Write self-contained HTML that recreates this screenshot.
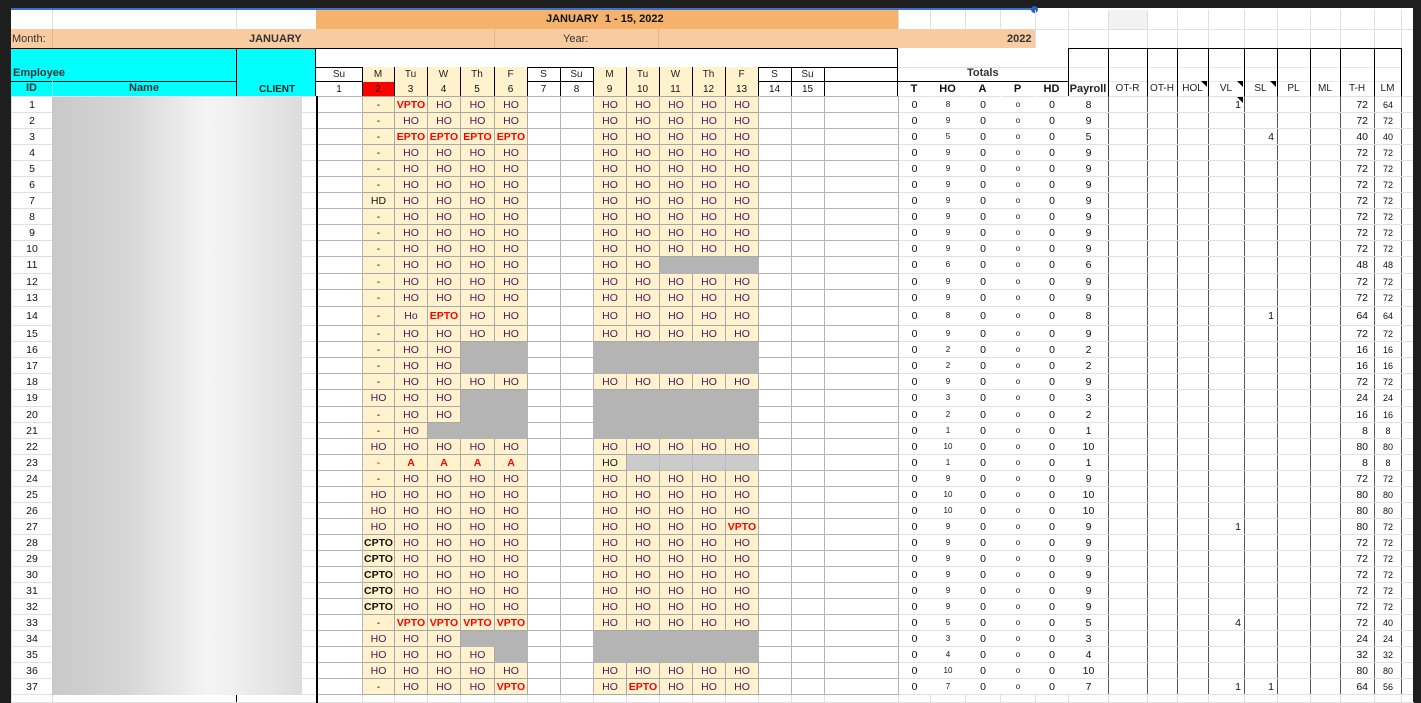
<!DOCTYPE html>
<html><head><meta charset="utf-8">
<style>
*{margin:0;padding:0;box-sizing:border-box}
body{width:1421px;height:702px;background:#1e1e1e;position:relative;overflow:hidden;font-family:"Liberation Sans",Arial,sans-serif;font-size:10px;color:#111}
.sheet{position:absolute;left:11px;top:8px;width:1402px;height:694px;background:#fff}
.a{position:absolute}
table{position:absolute;left:11px;top:96px;border-collapse:collapse;table-layout:fixed}
td{border:1px solid #e0e0e0;height:16px;text-align:center;white-space:nowrap;overflow:hidden;padding:0;font-size:10.5px;line-height:14px}
td:nth-child(n+4):nth-child(-n+19){border-color:#b4b4b4}
td:nth-child(n+5):nth-child(-n+9),td:nth-child(n+12):nth-child(-n+16){background:#fff2cc;border-color:#a8a8a8;color:#4a1660}
td:nth-child(3){border-right:2px solid #000}
td:nth-child(19){border-right:1px solid #b4b4b4}
td:nth-child(n+20):nth-child(-n+24){border-left-color:#fff;border-right-color:#fff}
td:nth-child(20){border-left:1px solid #ccc}
td:nth-child(21),td:nth-child(23){font-size:8px}
td:nth-child(n+25):nth-child(-n+34){border-left:1px solid #555;border-right:1px solid #555}
td:nth-child(29),td:nth-child(30){text-align:right;padding-right:3px}
td:nth-child(33){text-align:right;padding-right:6px}
td:nth-child(34){font-size:9px}
td.k{color:#111 !important}
td.r{color:#f00 !important;font-weight:bold}
td.b{color:#111 !important;font-weight:bold}
td.g{background:#b4b4b4 !important;border-color:#b4b4b4 !important}
td.l{background:#cbcbcb !important;border-color:#bdbdbd !important}
tr.last td{background:#fff !important;border-color:#e0e0e0 !important;height:8px}
tr.t17 td{height:17px}tr.t19 td{height:19px}
.hd{font-weight:bold;font-size:11px}
</style></head><body>
<div class="sheet"></div>
<div class="a" style="left:11px;top:8px;width:1024px;height:2px;background:#3a70d0"></div>
<div class="a" style="left:1031px;top:6px;width:7px;height:7px;border-radius:50%;background:#2a5fc8"></div>
<div class="a" style="left:11px;top:29px;width:1402px;height:1px;background:#e0e0e0"></div>
<div class="a" style="left:52px;top:10px;width:1px;height:19px;background:#e0e0e0"></div>
<div class="a" style="left:236px;top:10px;width:1px;height:19px;background:#e0e0e0"></div>
<div class="a" style="left:316px;top:10px;width:582px;height:19px;background:#f4b26b;font-weight:bold;font-size:11px;line-height:19px;padding-left:230px">JANUARY&nbsp; 1 - 15, 2022</div>
<div class="a" style="left:1108px;top:10px;width:39px;height:19px;background:#f2f2f2"></div>
<div class="a" style="left:898px;top:10px;width:1px;height:38px;background:#e0e0e0"></div>
<div class="a" style="left:930px;top:10px;width:1px;height:19px;background:#e0e0e0"></div>
<div class="a" style="left:965px;top:10px;width:1px;height:19px;background:#e0e0e0"></div>
<div class="a" style="left:1000px;top:10px;width:1px;height:19px;background:#e0e0e0"></div>
<div class="a" style="left:1035px;top:10px;width:1px;height:38px;background:#e0e0e0"></div>
<div class="a" style="left:1068px;top:10px;width:1px;height:38px;background:#e0e0e0"></div>
<div class="a" style="left:1108px;top:10px;width:1px;height:38px;background:#e0e0e0"></div>
<div class="a" style="left:1147px;top:10px;width:1px;height:38px;background:#e0e0e0"></div>
<div class="a" style="left:1177px;top:10px;width:1px;height:38px;background:#e0e0e0"></div>
<div class="a" style="left:1208px;top:10px;width:1px;height:38px;background:#e0e0e0"></div>
<div class="a" style="left:1244px;top:10px;width:1px;height:38px;background:#e0e0e0"></div>
<div class="a" style="left:1277px;top:10px;width:1px;height:38px;background:#e0e0e0"></div>
<div class="a" style="left:1310px;top:10px;width:1px;height:38px;background:#e0e0e0"></div>
<div class="a" style="left:1340px;top:10px;width:1px;height:38px;background:#e0e0e0"></div>
<div class="a" style="left:1374px;top:10px;width:1px;height:38px;background:#e0e0e0"></div>
<div class="a" style="left:1401px;top:10px;width:1px;height:86px;background:#e0e0e0"></div>
<div class="a" style="left:11px;top:29px;width:1024px;height:19px;background:#f8cba0"></div>
<div class="a" style="left:52px;top:29px;width:1px;height:19px;background:#e6b48a"></div>
<div class="a" style="left:494px;top:29px;width:1px;height:19px;background:#e6b48a"></div>
<div class="a" style="left:658px;top:29px;width:1px;height:19px;background:#e6b48a"></div>
<div class="a" style="left:12px;top:33px;font-size:11px;color:#333">Month:</div>
<div class="a" style="left:249px;top:33px;font-size:11px;font-weight:bold;color:#333">JANUARY</div>
<div class="a" style="left:563px;top:33px;font-size:11px;color:#333">Year:</div>
<div class="a" style="left:1007px;top:33px;font-size:11px;font-weight:bold;color:#333">2022</div>
<div class="a" style="left:11px;top:48px;width:887px;height:1px;background:#000"></div>
<div class="a" style="left:1068px;top:48px;width:333px;height:1px;background:#000"></div>
<div class="a" style="left:11px;top:49px;width:225px;height:47px;background:#00ffff"></div>
<div class="a" style="left:236px;top:49px;width:80px;height:47px;background:#00ffff;border-left:1px solid #000;border-right:1px solid #000"></div>
<div class="a" style="left:11px;top:81px;width:225px;height:1px;background:#000"></div>
<div class="a" style="left:52px;top:81px;width:1px;height:15px;background:#9ee"></div>
<div class="a hd" style="left:13px;top:67px;color:#333">Employee</div>
<div class="a hd" style="left:26px;top:82px;color:#333">ID</div>
<div class="a hd" style="left:129px;top:82px;color:#333">Name</div>
<div class="a hd" style="left:259px;top:84px;font-size:10px;color:#222">CLIENT</div>
<div class="a" style="left:316px;top:67px;width:582px;height:1px;background:#000"></div>
<div class="a" style="left:316px;top:81px;width:582px;height:1px;background:#000"></div>
<div class="a" style="left:316px;top:96px;width:582px;height:1px;background:#000"></div>
<div class="a" style="left:897px;top:48px;width:1px;height:48px;background:#000"></div>
<div class="a" style="left:362px;top:67px;width:165px;height:29px;background:#fff2cc"></div>
<div class="a" style="left:593px;top:67px;width:165px;height:29px;background:#fff2cc"></div>
<div class="a" style="left:362px;top:82px;width:32px;height:14px;background:#f00"></div>
<div class="a" style="top:67px;left:362px;width:1px;height:29px;background:#000"></div>
<div class="a" style="top:67px;left:394px;width:1px;height:29px;background:#000"></div>
<div class="a" style="top:67px;left:427px;width:1px;height:29px;background:#000"></div>
<div class="a" style="top:67px;left:460px;width:1px;height:29px;background:#000"></div>
<div class="a" style="top:67px;left:494px;width:1px;height:29px;background:#000"></div>
<div class="a" style="top:67px;left:527px;width:1px;height:29px;background:#000"></div>
<div class="a" style="top:67px;left:560px;width:1px;height:29px;background:#000"></div>
<div class="a" style="top:67px;left:593px;width:1px;height:29px;background:#000"></div>
<div class="a" style="top:67px;left:626px;width:1px;height:29px;background:#000"></div>
<div class="a" style="top:67px;left:659px;width:1px;height:29px;background:#000"></div>
<div class="a" style="top:67px;left:692px;width:1px;height:29px;background:#000"></div>
<div class="a" style="top:67px;left:725px;width:1px;height:29px;background:#000"></div>
<div class="a" style="top:67px;left:758px;width:1px;height:29px;background:#000"></div>
<div class="a" style="top:67px;left:791px;width:1px;height:29px;background:#000"></div>
<div class="a" style="top:67px;left:824px;width:1px;height:29px;background:#000"></div>
<div class="a" style="top:68px;left:316px;width:508px;display:flex;font-size:10px;line-height:13px;color:#222;text-align:center">
<span style="width:46px">Su</span><span style="width:32px">M</span><span style="width:33px">Tu</span><span style="width:33px">W</span><span style="width:34px">Th</span><span style="width:33px">F</span><span style="width:33px">S</span><span style="width:33px">Su</span><span style="width:33px">M</span><span style="width:33px">Tu</span><span style="width:33px">W</span><span style="width:33px">Th</span><span style="width:33px">F</span><span style="width:33px">S</span><span style="width:33px">Su</span></div>
<div class="a" style="top:83px;left:316px;width:508px;display:flex;font-size:10px;line-height:13px;color:#111;text-align:center">
<span style="width:46px">1</span><span style="width:32px">2</span><span style="width:33px">3</span><span style="width:33px">4</span><span style="width:34px">5</span><span style="width:33px">6</span><span style="width:33px">7</span><span style="width:33px">8</span><span style="width:33px">9</span><span style="width:33px">10</span><span style="width:33px">11</span><span style="width:33px">12</span><span style="width:33px">13</span><span style="width:33px">14</span><span style="width:33px">15</span></div>
<div class="a" style="left:898px;top:81px;width:170px;height:1px;background:#000"></div>
<div class="a" style="left:898px;top:96px;width:503px;height:1px;background:#000"></div>
<div class="a" style="left:898px;top:67px;width:170px;height:1px;background:#e0e0e0"></div>
<div class="a hd" style="left:967px;top:67px;color:#333">Totals</div>
<div class="a" style="top:82px;left:898px;width:170px;display:flex;font-size:11px;font-weight:bold;line-height:14px;text-align:center">
<span style="width:32px">T</span><span style="width:35px">HO</span><span style="width:35px">A</span><span style="width:35px">P</span><span style="width:33px">HD</span></div>
<div class="a" style="left:1068px;top:67px;width:333px;height:1px;background:#e6e6e6"></div>
<div class="a" style="left:1068px;top:81px;width:333px;height:1px;background:#e6e6e6"></div>
<div class="a" style="top:48px;left:1068px;width:1px;height:48px;background:#000"></div>
<div class="a" style="top:48px;left:1108px;width:1px;height:48px;background:#000"></div>
<div class="a" style="top:48px;left:1147px;width:1px;height:48px;background:#000"></div>
<div class="a" style="top:48px;left:1177px;width:1px;height:48px;background:#000"></div>
<div class="a" style="top:48px;left:1208px;width:1px;height:48px;background:#000"></div>
<div class="a" style="top:48px;left:1244px;width:1px;height:48px;background:#000"></div>
<div class="a" style="top:48px;left:1277px;width:1px;height:48px;background:#000"></div>
<div class="a" style="top:48px;left:1310px;width:1px;height:48px;background:#000"></div>
<div class="a" style="top:48px;left:1340px;width:1px;height:48px;background:#000"></div>
<div class="a" style="top:48px;left:1374px;width:1px;height:48px;background:#000"></div>
<div class="a" style="top:48px;left:1401px;width:1px;height:48px;background:#000"></div>
<div class="a" style="top:82px;left:1068px;width:333px;display:flex;font-size:10px;line-height:14px;text-align:center;color:#222">
<span style="width:40px;font-weight:bold;font-size:11px">Payroll</span><span style="width:39px">OT-R</span><span style="width:30px">OT-H</span><span style="width:31px">HOL</span><span style="width:36px">VL</span><span style="width:33px">SL</span><span style="width:33px">PL</span><span style="width:30px">ML</span><span style="width:34px">T-H</span><span style="width:27px">LM</span></div>
<svg class="a" style="left:0;top:0" width="1421" height="702">
<polygon points="1201,81 1207,81 1207,87" fill="#000"/>
<polygon points="1237,81 1243,81 1243,87" fill="#000"/>
<polygon points="1270,81 1276,81 1276,87" fill="#000"/>
<polygon points="1237,97 1243,97 1243,103" fill="#000"/>
</svg>

<table>
<colgroup><col style="width:41px"><col style="width:184px"><col style="width:80px"><col style="width:46px"><col style="width:32px"><col style="width:33px"><col style="width:33px"><col style="width:34px"><col style="width:33px"><col style="width:33px"><col style="width:33px"><col style="width:33px"><col style="width:33px"><col style="width:33px"><col style="width:33px"><col style="width:33px"><col style="width:33px"><col style="width:33px"><col style="width:74px"><col style="width:32px"><col style="width:35px"><col style="width:35px"><col style="width:35px"><col style="width:33px"><col style="width:40px"><col style="width:39px"><col style="width:30px"><col style="width:31px"><col style="width:36px"><col style="width:33px"><col style="width:33px"><col style="width:30px"><col style="width:34px"><col style="width:27px"><col style="width:12px"></colgroup>
<tr><td>1</td><td></td><td></td><td></td><td class=k>-</td><td class=r>VPTO</td><td>HO</td><td>HO</td><td>HO</td><td></td><td></td><td>HO</td><td>HO</td><td>HO</td><td>HO</td><td>HO</td><td></td><td></td><td></td><td>0</td><td>8</td><td>0</td><td>o</td><td>0</td><td>8</td><td></td><td></td><td></td><td>1</td><td></td><td></td><td></td><td>72</td><td>64</td><td></td></tr>
<tr><td>2</td><td></td><td></td><td></td><td class=k>-</td><td>HO</td><td>HO</td><td>HO</td><td>HO</td><td></td><td></td><td>HO</td><td>HO</td><td>HO</td><td>HO</td><td>HO</td><td></td><td></td><td></td><td>0</td><td>9</td><td>0</td><td>o</td><td>0</td><td>9</td><td></td><td></td><td></td><td></td><td></td><td></td><td></td><td>72</td><td>72</td><td></td></tr>
<tr><td>3</td><td></td><td></td><td></td><td class=k>-</td><td class=r>EPTO</td><td class=r>EPTO</td><td class=r>EPTO</td><td class=r>EPTO</td><td></td><td></td><td>HO</td><td>HO</td><td>HO</td><td>HO</td><td>HO</td><td></td><td></td><td></td><td>0</td><td>5</td><td>0</td><td>o</td><td>0</td><td>5</td><td></td><td></td><td></td><td></td><td>4</td><td></td><td></td><td>40</td><td>40</td><td></td></tr>
<tr><td>4</td><td></td><td></td><td></td><td class=k>-</td><td>HO</td><td>HO</td><td>HO</td><td>HO</td><td></td><td></td><td>HO</td><td>HO</td><td>HO</td><td>HO</td><td>HO</td><td></td><td></td><td></td><td>0</td><td>9</td><td>0</td><td>o</td><td>0</td><td>9</td><td></td><td></td><td></td><td></td><td></td><td></td><td></td><td>72</td><td>72</td><td></td></tr>
<tr><td>5</td><td></td><td></td><td></td><td class=k>-</td><td>HO</td><td>HO</td><td>HO</td><td>HO</td><td></td><td></td><td>HO</td><td>HO</td><td>HO</td><td>HO</td><td>HO</td><td></td><td></td><td></td><td>0</td><td>9</td><td>0</td><td>o</td><td>0</td><td>9</td><td></td><td></td><td></td><td></td><td></td><td></td><td></td><td>72</td><td>72</td><td></td></tr>
<tr><td>6</td><td></td><td></td><td></td><td class=k>-</td><td>HO</td><td>HO</td><td>HO</td><td>HO</td><td></td><td></td><td>HO</td><td>HO</td><td>HO</td><td>HO</td><td>HO</td><td></td><td></td><td></td><td>0</td><td>9</td><td>0</td><td>o</td><td>0</td><td>9</td><td></td><td></td><td></td><td></td><td></td><td></td><td></td><td>72</td><td>72</td><td></td></tr>
<tr><td>7</td><td></td><td></td><td></td><td class=k>HD</td><td>HO</td><td>HO</td><td>HO</td><td>HO</td><td></td><td></td><td>HO</td><td>HO</td><td>HO</td><td>HO</td><td>HO</td><td></td><td></td><td></td><td>0</td><td>9</td><td>0</td><td>o</td><td>0</td><td>9</td><td></td><td></td><td></td><td></td><td></td><td></td><td></td><td>72</td><td>72</td><td></td></tr>
<tr><td>8</td><td></td><td></td><td></td><td class=k>-</td><td>HO</td><td>HO</td><td>HO</td><td>HO</td><td></td><td></td><td>HO</td><td>HO</td><td>HO</td><td>HO</td><td>HO</td><td></td><td></td><td></td><td>0</td><td>9</td><td>0</td><td>o</td><td>0</td><td>9</td><td></td><td></td><td></td><td></td><td></td><td></td><td></td><td>72</td><td>72</td><td></td></tr>
<tr><td>9</td><td></td><td></td><td></td><td class=k>-</td><td>HO</td><td>HO</td><td>HO</td><td>HO</td><td></td><td></td><td>HO</td><td>HO</td><td>HO</td><td>HO</td><td>HO</td><td></td><td></td><td></td><td>0</td><td>9</td><td>0</td><td>o</td><td>0</td><td>9</td><td></td><td></td><td></td><td></td><td></td><td></td><td></td><td>72</td><td>72</td><td></td></tr>
<tr><td>10</td><td></td><td></td><td></td><td class=k>-</td><td>HO</td><td>HO</td><td>HO</td><td>HO</td><td></td><td></td><td>HO</td><td>HO</td><td>HO</td><td>HO</td><td>HO</td><td></td><td></td><td></td><td>0</td><td>9</td><td>0</td><td>o</td><td>0</td><td>9</td><td></td><td></td><td></td><td></td><td></td><td></td><td></td><td>72</td><td>72</td><td></td></tr>
<tr class=t17><td>11</td><td></td><td></td><td></td><td class=k>-</td><td>HO</td><td>HO</td><td>HO</td><td>HO</td><td></td><td></td><td>HO</td><td>HO</td><td class=g></td><td class=g></td><td class=g></td><td></td><td></td><td></td><td>0</td><td>6</td><td>0</td><td>o</td><td>0</td><td>6</td><td></td><td></td><td></td><td></td><td></td><td></td><td></td><td>48</td><td>48</td><td></td></tr>
<tr><td>12</td><td></td><td></td><td></td><td class=k>-</td><td>HO</td><td>HO</td><td>HO</td><td>HO</td><td></td><td></td><td>HO</td><td>HO</td><td>HO</td><td>HO</td><td>HO</td><td></td><td></td><td></td><td>0</td><td>9</td><td>0</td><td>o</td><td>0</td><td>9</td><td></td><td></td><td></td><td></td><td></td><td></td><td></td><td>72</td><td>72</td><td></td></tr>
<tr class=t17><td>13</td><td></td><td></td><td></td><td class=k>-</td><td>HO</td><td>HO</td><td>HO</td><td>HO</td><td></td><td></td><td>HO</td><td>HO</td><td>HO</td><td>HO</td><td>HO</td><td></td><td></td><td></td><td>0</td><td>9</td><td>0</td><td>o</td><td>0</td><td>9</td><td></td><td></td><td></td><td></td><td></td><td></td><td></td><td>72</td><td>72</td><td></td></tr>
<tr class=t19><td>14</td><td></td><td></td><td></td><td class=k>-</td><td>Ho</td><td class=r>EPTO</td><td>HO</td><td>HO</td><td></td><td></td><td>HO</td><td>HO</td><td>HO</td><td>HO</td><td>HO</td><td></td><td></td><td></td><td>0</td><td>8</td><td>0</td><td>o</td><td>0</td><td>8</td><td></td><td></td><td></td><td></td><td>1</td><td></td><td></td><td>64</td><td>64</td><td></td></tr>
<tr><td>15</td><td></td><td></td><td></td><td class=k>-</td><td>HO</td><td>HO</td><td>HO</td><td>HO</td><td></td><td></td><td>HO</td><td>HO</td><td>HO</td><td>HO</td><td>HO</td><td></td><td></td><td></td><td>0</td><td>9</td><td>0</td><td>o</td><td>0</td><td>9</td><td></td><td></td><td></td><td></td><td></td><td></td><td></td><td>72</td><td>72</td><td></td></tr>
<tr><td>16</td><td></td><td></td><td></td><td class=k>-</td><td>HO</td><td>HO</td><td class=g></td><td class=g></td><td></td><td></td><td class=g></td><td class=g></td><td class=g></td><td class=g></td><td class=g></td><td></td><td></td><td></td><td>0</td><td>2</td><td>0</td><td>o</td><td>0</td><td>2</td><td></td><td></td><td></td><td></td><td></td><td></td><td></td><td>16</td><td>16</td><td></td></tr>
<tr><td>17</td><td></td><td></td><td></td><td class=k>-</td><td>HO</td><td>HO</td><td class=g></td><td class=g></td><td></td><td></td><td class=g></td><td class=g></td><td class=g></td><td class=g></td><td class=g></td><td></td><td></td><td></td><td>0</td><td>2</td><td>0</td><td>o</td><td>0</td><td>2</td><td></td><td></td><td></td><td></td><td></td><td></td><td></td><td>16</td><td>16</td><td></td></tr>
<tr><td>18</td><td></td><td></td><td></td><td class=k>-</td><td>HO</td><td>HO</td><td>HO</td><td>HO</td><td></td><td></td><td>HO</td><td>HO</td><td>HO</td><td>HO</td><td>HO</td><td></td><td></td><td></td><td>0</td><td>9</td><td>0</td><td>o</td><td>0</td><td>9</td><td></td><td></td><td></td><td></td><td></td><td></td><td></td><td>72</td><td>72</td><td></td></tr>
<tr class=t17><td>19</td><td></td><td></td><td></td><td>HO</td><td>HO</td><td>HO</td><td class=g></td><td class=g></td><td></td><td></td><td class=g></td><td class=g></td><td class=g></td><td class=g></td><td class=g></td><td></td><td></td><td></td><td>0</td><td>3</td><td>0</td><td>o</td><td>0</td><td>3</td><td></td><td></td><td></td><td></td><td></td><td></td><td></td><td>24</td><td>24</td><td></td></tr>
<tr><td>20</td><td></td><td></td><td></td><td class=k>-</td><td>HO</td><td>HO</td><td class=g></td><td class=g></td><td></td><td></td><td class=g></td><td class=g></td><td class=g></td><td class=g></td><td class=g></td><td></td><td></td><td></td><td>0</td><td>2</td><td>0</td><td>o</td><td>0</td><td>2</td><td></td><td></td><td></td><td></td><td></td><td></td><td></td><td>16</td><td>16</td><td></td></tr>
<tr><td>21</td><td></td><td></td><td></td><td class=k>-</td><td>HO</td><td class=g></td><td class=g></td><td class=g></td><td></td><td></td><td class=g></td><td class=g></td><td class=g></td><td class=g></td><td class=g></td><td></td><td></td><td></td><td>0</td><td>1</td><td>0</td><td>o</td><td>0</td><td>1</td><td></td><td></td><td></td><td></td><td></td><td></td><td></td><td>8</td><td>8</td><td></td></tr>
<tr><td>22</td><td></td><td></td><td></td><td>HO</td><td>HO</td><td>HO</td><td>HO</td><td>HO</td><td></td><td></td><td>HO</td><td>HO</td><td>HO</td><td>HO</td><td>HO</td><td></td><td></td><td></td><td>0</td><td>10</td><td>0</td><td>o</td><td>0</td><td>10</td><td></td><td></td><td></td><td></td><td></td><td></td><td></td><td>80</td><td>80</td><td></td></tr>
<tr><td>23</td><td></td><td></td><td></td><td class=r style="font-weight:normal">-</td><td class=r>A</td><td class=r>A</td><td class=r>A</td><td class=r>A</td><td></td><td></td><td class=k>HO</td><td class=l></td><td class=l></td><td class=l></td><td class=l></td><td></td><td></td><td></td><td>0</td><td>1</td><td>0</td><td>o</td><td>0</td><td>1</td><td></td><td></td><td></td><td></td><td></td><td></td><td></td><td>8</td><td>8</td><td></td></tr>
<tr><td>24</td><td></td><td></td><td></td><td class=k>-</td><td>HO</td><td>HO</td><td>HO</td><td>HO</td><td></td><td></td><td>HO</td><td>HO</td><td>HO</td><td>HO</td><td>HO</td><td></td><td></td><td></td><td>0</td><td>9</td><td>0</td><td>o</td><td>0</td><td>9</td><td></td><td></td><td></td><td></td><td></td><td></td><td></td><td>72</td><td>72</td><td></td></tr>
<tr><td>25</td><td></td><td></td><td></td><td>HO</td><td>HO</td><td>HO</td><td>HO</td><td>HO</td><td></td><td></td><td>HO</td><td>HO</td><td>HO</td><td>HO</td><td>HO</td><td></td><td></td><td></td><td>0</td><td>10</td><td>0</td><td>o</td><td>0</td><td>10</td><td></td><td></td><td></td><td></td><td></td><td></td><td></td><td>80</td><td>80</td><td></td></tr>
<tr><td>26</td><td></td><td></td><td></td><td>HO</td><td>HO</td><td>HO</td><td>HO</td><td>HO</td><td></td><td></td><td>HO</td><td>HO</td><td>HO</td><td>HO</td><td>HO</td><td></td><td></td><td></td><td>0</td><td>10</td><td>0</td><td>o</td><td>0</td><td>10</td><td></td><td></td><td></td><td></td><td></td><td></td><td></td><td>80</td><td>80</td><td></td></tr>
<tr><td>27</td><td></td><td></td><td></td><td>HO</td><td>HO</td><td>HO</td><td>HO</td><td>HO</td><td></td><td></td><td>HO</td><td>HO</td><td>HO</td><td>HO</td><td class=r>VPTO</td><td></td><td></td><td></td><td>0</td><td>9</td><td>0</td><td>o</td><td>0</td><td>9</td><td></td><td></td><td></td><td>1</td><td></td><td></td><td></td><td>80</td><td>72</td><td></td></tr>
<tr><td>28</td><td></td><td></td><td></td><td class=b>CPTO</td><td>HO</td><td>HO</td><td>HO</td><td>HO</td><td></td><td></td><td>HO</td><td>HO</td><td>HO</td><td>HO</td><td>HO</td><td></td><td></td><td></td><td>0</td><td>9</td><td>0</td><td>o</td><td>0</td><td>9</td><td></td><td></td><td></td><td></td><td></td><td></td><td></td><td>72</td><td>72</td><td></td></tr>
<tr><td>29</td><td></td><td></td><td></td><td class=b>CPTO</td><td>HO</td><td>HO</td><td>HO</td><td>HO</td><td></td><td></td><td>HO</td><td>HO</td><td>HO</td><td>HO</td><td>HO</td><td></td><td></td><td></td><td>0</td><td>9</td><td>0</td><td>o</td><td>0</td><td>9</td><td></td><td></td><td></td><td></td><td></td><td></td><td></td><td>72</td><td>72</td><td></td></tr>
<tr><td>30</td><td></td><td></td><td></td><td class=b>CPTO</td><td>HO</td><td>HO</td><td>HO</td><td>HO</td><td></td><td></td><td>HO</td><td>HO</td><td>HO</td><td>HO</td><td>HO</td><td></td><td></td><td></td><td>0</td><td>9</td><td>0</td><td>o</td><td>0</td><td>9</td><td></td><td></td><td></td><td></td><td></td><td></td><td></td><td>72</td><td>72</td><td></td></tr>
<tr><td>31</td><td></td><td></td><td></td><td class=b>CPTO</td><td>HO</td><td>HO</td><td>HO</td><td>HO</td><td></td><td></td><td>HO</td><td>HO</td><td>HO</td><td>HO</td><td>HO</td><td></td><td></td><td></td><td>0</td><td>9</td><td>0</td><td>o</td><td>0</td><td>9</td><td></td><td></td><td></td><td></td><td></td><td></td><td></td><td>72</td><td>72</td><td></td></tr>
<tr><td>32</td><td></td><td></td><td></td><td class=b>CPTO</td><td>HO</td><td>HO</td><td>HO</td><td>HO</td><td></td><td></td><td>HO</td><td>HO</td><td>HO</td><td>HO</td><td>HO</td><td></td><td></td><td></td><td>0</td><td>9</td><td>0</td><td>o</td><td>0</td><td>9</td><td></td><td></td><td></td><td></td><td></td><td></td><td></td><td>72</td><td>72</td><td></td></tr>
<tr><td>33</td><td></td><td></td><td></td><td class=k>-</td><td class=r>VPTO</td><td class=r>VPTO</td><td class=r>VPTO</td><td class=r>VPTO</td><td></td><td></td><td>HO</td><td>HO</td><td>HO</td><td>HO</td><td>HO</td><td></td><td></td><td></td><td>0</td><td>5</td><td>0</td><td>o</td><td>0</td><td>5</td><td></td><td></td><td></td><td>4</td><td></td><td></td><td></td><td>72</td><td>40</td><td></td></tr>
<tr><td>34</td><td></td><td></td><td></td><td>HO</td><td>HO</td><td>HO</td><td class=g></td><td class=g></td><td></td><td></td><td class=g></td><td class=g></td><td class=g></td><td class=g></td><td class=g></td><td></td><td></td><td></td><td>0</td><td>3</td><td>0</td><td>o</td><td>0</td><td>3</td><td></td><td></td><td></td><td></td><td></td><td></td><td></td><td>24</td><td>24</td><td></td></tr>
<tr><td>35</td><td></td><td></td><td></td><td>HO</td><td>HO</td><td>HO</td><td>HO</td><td class=g></td><td></td><td></td><td class=g></td><td class=g></td><td class=g></td><td class=g></td><td class=g></td><td></td><td></td><td></td><td>0</td><td>4</td><td>0</td><td>o</td><td>0</td><td>4</td><td></td><td></td><td></td><td></td><td></td><td></td><td></td><td>32</td><td>32</td><td></td></tr>
<tr><td>36</td><td></td><td></td><td></td><td>HO</td><td>HO</td><td>HO</td><td>HO</td><td>HO</td><td></td><td></td><td>HO</td><td>HO</td><td>HO</td><td>HO</td><td>HO</td><td></td><td></td><td></td><td>0</td><td>10</td><td>0</td><td>o</td><td>0</td><td>10</td><td></td><td></td><td></td><td></td><td></td><td></td><td></td><td>80</td><td>80</td><td></td></tr>
<tr><td>37</td><td></td><td></td><td></td><td class=k>-</td><td>HO</td><td>HO</td><td>HO</td><td class=r>VPTO</td><td></td><td></td><td>HO</td><td class=r>EPTO</td><td>HO</td><td>HO</td><td>HO</td><td></td><td></td><td></td><td>0</td><td>7</td><td>0</td><td>o</td><td>0</td><td>7</td><td></td><td></td><td></td><td>1</td><td>1</td><td></td><td></td><td>64</td><td>56</td><td></td></tr>
<tr class=last><td></td><td></td><td style="border-right:2px solid #000 !important"></td><td></td><td></td><td></td><td></td><td></td><td></td><td></td><td></td><td></td><td></td><td></td><td></td><td></td><td></td><td></td><td></td><td></td><td></td><td></td><td></td><td></td><td></td><td></td><td></td><td></td><td></td><td></td><td></td><td></td><td></td><td></td><td></td></tr>
</table>
<div class="a" style="left:52px;top:97px;width:250px;height:598px;background:linear-gradient(90deg,#c9c9c9 0%,#d6d6d6 30%,#f4f4f4 62%,#f0f0f0 72%,#dcdcdc 100%)"></div>
<div class="a" style="left:236px;top:695px;width:1px;height:7px;background:#000"></div>
<div class="a" style="left:1413px;top:0;width:8px;height:702px;background:#1e1e1e"></div>
</body></html>
